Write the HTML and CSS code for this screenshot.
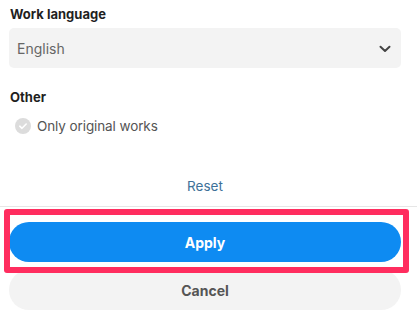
FILE: index.html
```html
<!DOCTYPE html>
<html lang="en">
<head>
<meta charset="utf-8">
<link rel="stylesheet" href="styles.css">
</head>
<body>
<div class="panel">
  <div class="section">
    <div class="label">Work language</div>
    <div class="select">
      <span class="select-value">English</span>
      <svg class="chevron" width="12" height="8" viewBox="0 0 12 8"><path d="M1.5 1.8 L6 6 L10.5 1.8" fill="none" stroke="#444" stroke-width="2" stroke-linecap="round" stroke-linejoin="round"/></svg>
    </div>
  </div>
  <div class="section other">
    <div class="label">Other</div>
    <div class="check-row">
      <span class="check">
        <svg width="16" height="16" viewBox="0 0 16 16"><circle cx="8" cy="8" r="8" fill="#dcdcdc"/><path d="M4.8 8.2 L7 10.3 L11.2 6" fill="none" stroke="#fff" stroke-width="1.6" stroke-linecap="round" stroke-linejoin="round"/></svg>
      </span>
      <span class="check-text">Only original works</span>
    </div>
  </div>
  <div class="reset-row"><span class="reset">Reset</span></div>
</div>
<div class="footer">
  <button class="btn btn-apply">Apply</button>
  <button class="btn btn-cancel">Cancel</button>
  <div class="highlight"></div>
</div>
</body>
</html>
```

FILE: styles.css
```css
html, body {
  margin: 0;
  padding: 0;
  background: #fff;
  font-family: Inter, "Liberation Sans", sans-serif;
}
.panel {
  padding: 6px 16px 0 9px;
}
.label {
  font-size: 13px;
  font-weight: 700;
  line-height: 16px;
  color: #1f1f1f;
  padding-left: 1px;
}
.select {
  margin-top: 6px;
  height: 40px;
  background: #f3f3f3;
  border-radius: 5px;
  display: flex;
  align-items: center;
  justify-content: space-between;
  padding: 0 10px 0 8px;
}
.select-value {
  font-size: 14px;
  color: #666;
}
.chevron {
  display: block;
  margin-top: 1px;
}
.other {
  margin-top: 21px;
}
.check-row {
  margin-top: 11px;
  height: 20px;
  display: flex;
  align-items: center;
  padding-left: 6px;
  gap: 6px;
}
.check svg {
  display: block;
}
.check-text {
  font-size: 13.5px;
  color: #555;
  letter-spacing: -0.1px;
}
.reset-row {
  margin-top: 40px;
  height: 20px;
  display: flex;
  align-items: center;
  justify-content: center;
}
.reset {
  font-size: 13.5px;
  color: #3d7199;
}
.footer {
  position: relative;
  margin-top: 10px;
  border-top: 1px solid #e6e6e6;
  padding: 15px 16px 0 9px;
  display: flex;
  flex-direction: column;
  gap: 8px;
}
.btn {
  height: 40px;
  border: none;
  border-radius: 20px;
  font-family: Inter, "Liberation Sans", sans-serif;
  font-size: 14px;
  font-weight: 700;
  width: 100%;
}
.btn-apply {
  background: #0e8bf2;
  color: #fff;
}
.btn-cancel {
  background: #f3f3f3;
  color: #555;
}
.highlight {
  position: absolute;
  left: 4px;
  top: 2px;
  width: 393px;
  height: 52px;
  border: 6px solid #ff2d5f;
  border-radius: 3px;
}
```
